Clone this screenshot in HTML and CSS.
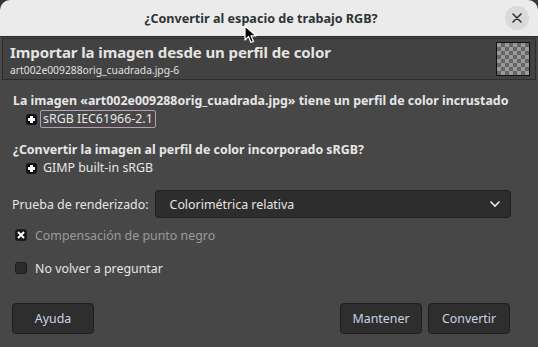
FILE: index.html
```html
<!DOCTYPE html>
<html lang="es">
<head>
  <meta charset="UTF-8" />
  <meta name="viewport" content="width=device-width, initial-scale=1.0" />
  <title>¿Convertir al espacio de trabajo RGB?</title>
  <link rel="stylesheet" href="styles.css">
</head>
<body>
  <div class="window">
    <header class="titlebar">
      <span class="title">¿Convertir al espacio de trabajo RGB?</span>
      <button class="close" aria-label="Cerrar">
        <svg width="10" height="10" viewBox="0 0 10 10"><path d="M1 1L9 9M9 1L1 9" stroke="#2e3436" stroke-width="1.6" stroke-linecap="round"/></svg>
      </button>
      <!-- mouse pointer -->
      <svg class="cursor" width="14" height="20" viewBox="0 0 14 20"><path d="M1 1L1 15L4.5 11.5L7 17.5L9.5 16.5L7 10.8L12 10.8Z" fill="#000" stroke="#fff" stroke-width="1.2" stroke-linejoin="round"/></svg>
    </header>

    <div class="banner">
      <div class="banner-text">
        <div class="banner-title">Importar la imagen desde un perfil de color</div>
        <div class="banner-sub">art002e009288orig_cuadrada.jpg-6</div>
      </div>
      <div class="thumb"></div>
    </div>

    <main class="content">
      <p class="heading">La imagen «art002e009288orig_cuadrada.jpg» tiene un perfil de color incrustado</p>
      <div class="profile">
        <span class="expander"></span>
        <span class="profile-name focused">sRGB IEC61966-2.1</span>
      </div>

      <p class="heading second">¿Convertir la imagen al perfil de color incorporado sRGB?</p>
      <div class="profile">
        <span class="expander"></span>
        <span class="profile-name">GIMP built-in sRGB</span>
      </div>

      <div class="intent-row">
        <span class="intent-label">Prueba de renderizado:</span>
        <div class="combo">
          <span>Colorimétrica relativa</span>
          <svg width="12" height="8" viewBox="0 0 12 8"><path d="M1.5 1.5L6 6L10.5 1.5" fill="none" stroke="#e8e8e8" stroke-width="1.6"/></svg>
        </div>
      </div>

      <label class="check disabled">
        <span class="box">
          <svg width="8" height="8" viewBox="0 0 8 8"><path d="M1 1L7 7M7 1L1 7" stroke="#fff" stroke-width="2"/></svg>
        </span>
        Compensación de punto negro
      </label>
      <label class="check">
        <span class="box"></span>
        No volver a preguntar
      </label>
    </main>

    <footer class="actions">
      <button class="btn">Ayuda</button>
      <span class="spacer"></span>
      <button class="btn">Mantener</button>
      <button class="btn">Convertir</button>
    </footer>
  </div>
</body>
</html>
```

FILE: styles.css
```css
body {
  margin: 0;
  background-color: #363636;
  font-family: 'Noto Sans', sans-serif;
  font-size: 12.4px;
  color: #e6e6e6;
}
.window {
  width: 538px;
  height: 347px;
  background-color: #474747;
  border-radius: 10px 10px 0 0;
  overflow: hidden;
  display: flex;
  flex-direction: column;
}

/* title bar */
.titlebar {
  position: relative;
  height: 36px;
  background-color: #ebebeb;
  border-bottom: 1px solid #2a2a2a;
  display: flex;
  align-items: center;
  justify-content: center;
  flex-shrink: 0;
}
.title {
  font-weight: bold;
  font-size: 12.6px;
  color: #2e3436;
  margin-left: -16px;
}
.close {
  position: absolute;
  right: 9px;
  top: 6px;
  width: 24px;
  height: 24px;
  border: none;
  border-radius: 50%;
  background-color: #dadada;
  display: flex;
  align-items: center;
  justify-content: center;
  padding: 0;
}
.cursor {
  position: absolute;
  left: 244px;
  top: 25px;
}

/* banner */
.banner {
  height: 38px;
  margin: 1px 2px 0;
  padding: 1px 5px 1px 7px;
  background-color: #424242;
  border: 1px solid #2d2d2d;
  display: flex;
  align-items: center;
  justify-content: space-between;
  flex-shrink: 0;
}
.banner-title {
  font-weight: bold;
  font-size: 15px;
  letter-spacing: -0.1px;
  color: #e4e4e4;
  line-height: 21px;
}
.banner-sub {
  font-size: 10.3px;
  color: #e0e0e0;
  line-height: 14px;
}
.thumb {
  width: 32px;
  height: 32px;
  border: 1px solid #111;
  background-color: #999;
  background-image:
    linear-gradient(45deg, #666 25%, transparent 25%, transparent 75%, #666 75%),
    linear-gradient(45deg, #666 25%, transparent 25%, transparent 75%, #666 75%);
  background-size: 8px 8px;
  background-position: 0 0, 4px 4px;
}

/* content */
.content {
  flex: 1;
  padding: 12px 20px 0 13px;
}
.heading {
  margin: 0;
  font-weight: bold;
  line-height: 17px;
  white-space: nowrap;
}
.heading.second {
  margin-top: 12px;
}
.profile {
  display: flex;
  align-items: center;
  gap: 3px;
  margin-left: 13px;
  height: 20px;
}
.expander {
  width: 11px;
  height: 11px;
  border-radius: 3px;
  background-color: #111;
  position: relative;
}
.expander::before,
.expander::after {
  content: "";
  position: absolute;
  background: #fff;
}
.expander::before { left: 2px; top: 4px; width: 7px; height: 3px; }
.expander::after { left: 4px; top: 2px; width: 3px; height: 7px; }
.profile-name {
  padding: 0 2px;
  border: 1px solid transparent;
  border-radius: 2px;
  line-height: 16px;
}
.profile-name.focused {
  border-color: #b89bb8;
}

.intent-row {
  display: flex;
  align-items: center;
  gap: 6px;
  margin-top: 12px;
  margin-left: -1px;
  margin-right: 7px;
}
.combo {
  flex: 1;
  height: 28px;
  box-sizing: border-box;
  padding: 0 9px 0 14px;
  background-color: #2d2d2d;
  border: 1px solid #1f1f1f;
  border-radius: 4px;
  display: flex;
  align-items: center;
  justify-content: space-between;
}

.check {
  display: flex;
  align-items: center;
  gap: 8px;
  height: 20px;
  margin-left: 2px;
  margin-top: 7px;
}
.check + .check {
  margin-top: 13px;
}
.check.disabled {
  color: #9a9a9a;
}
.box {
  width: 12px;
  height: 12px;
  box-sizing: border-box;
  border: 1px solid #1c1c1c;
  border-radius: 3px;
  background-color: #2b2b2b;
  display: flex;
  align-items: center;
  justify-content: center;
}
.check.disabled .box {
  background-color: #161616;
}

/* buttons */
.actions {
  display: flex;
  gap: 6px;
  padding: 0 28px 13px 12px;
}
.spacer { flex: 1; }
.btn {
  width: 82px;
  height: 31px;
  font-family: inherit;
  font-size: 12.4px;
  color: #c9d3e6;
  background-color: #2e2e2e;
  border: 1px solid #1d1d1d;
  border-radius: 4px;
}
```
